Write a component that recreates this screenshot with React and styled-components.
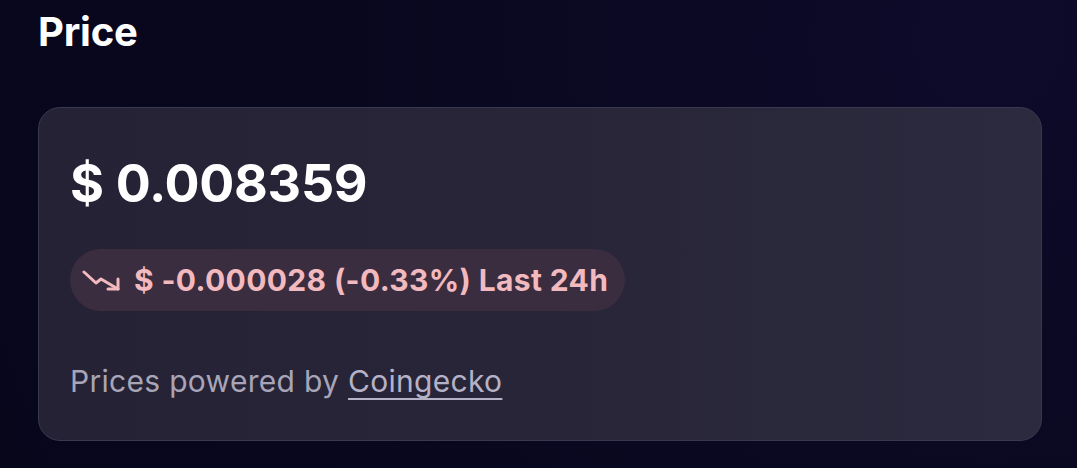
import React from 'react'
import styled, { createGlobalStyle } from 'styled-components'

const GlobalStyle = createGlobalStyle`
	html, body {
		margin: 0;
		padding: 0;
		background: #0a0820;
	}
	body {
		font-family: Inter, "Noto Sans", sans-serif;
		-webkit-font-smoothing: antialiased;
	}
`

const Page = styled.div`
	width: 1077px;
	height: 468px;
	box-sizing: border-box;
	padding: 6px 35px 0 38px;
	background: radial-gradient(circle at 92% 8%, #0e0a2a 0%, #0a0820 50%, #08061b 100%);
	overflow: hidden;
`

const Title = styled.h2`
	margin: 0;
	font-size: 40px;
	line-height: 52px;
	font-weight: 700;
	color: #ffffff;
	letter-spacing: -0.2px;
`

const Card = styled.section`
	margin-top: 49px;
	box-sizing: border-box;
	height: 334px;
	padding: 46px 32px 0 31px;
	border-radius: 22px;
	border: 1.5px solid #3a3850;
	background: linear-gradient(90deg, #242234 0%, #282638 60%, #2c2a3e 100%);
	display: flex;
	flex-direction: column;
	align-items: flex-start;
`

const Amount = styled.div`
	font-size: 52px;
	line-height: 60px;
	font-weight: 700;
	color: #ffffff;
	letter-spacing: -0.3px;
`

const Change = styled.div`
	margin-top: 35px;
	display: inline-flex;
	align-items: center;
	gap: 14px;
	height: 62px;
	padding: 0 17px 0 12px;
	border-radius: 31px;
	background: ${(props) => (props.down ? '#3a2d3f' : '#22393a')};
	color: ${(props) => (props.down ? '#f2babe' : '#a8eec0')};
	font-size: 30px;
	font-weight: 700;
	letter-spacing: 0.35px;
`

const TrendIcon = styled.svg`
	flex: none;
	margin-top: 2px;
`

const Footer = styled.p`
	margin: 51px 0 0 0;
	font-size: 30px;
	line-height: 38px;
	color: #a8a5b9;
	letter-spacing: 0.3px;
`

const Link = styled.a`
	color: #b5b2c7;
	text-decoration: underline;
	text-decoration-thickness: 2px;
	text-underline-offset: 6px;
`

// zig-zag line falling to the right, arrow head in the lower corner
const TrendDown = () => (
	<TrendIcon width="38" height="22" viewBox="0 0 38 22" fill="none" stroke="currentColor" strokeWidth="3" strokeLinecap="round" strokeLinejoin="round">
		<polyline points="2 2 14 13 19 9 36 19" />
		<polyline points="36 9 36 19 26 19" />
	</TrendIcon>
)

export default function App() {
	return (
		<>
			<GlobalStyle />
			<Page>
				<Title>Price</Title>
				<Card>
					<Amount>$ 0.008359</Amount>
					<Change down>
						<TrendDown />
						<span>$ -0.000028 (-0.33%) Last 24h</span>
					</Change>
					<Footer>
						Prices powered by <Link href="#">Coingecko</Link>
					</Footer>
				</Card>
			</Page>
		</>
	)
}
